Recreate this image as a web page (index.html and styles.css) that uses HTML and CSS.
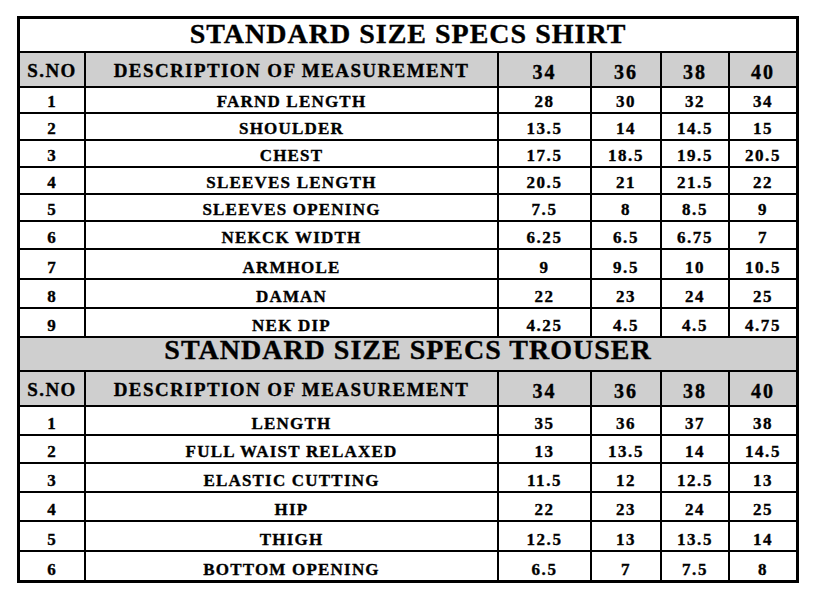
FILE: index.html
```html
<!DOCTYPE html>
<html lang="en">
<head>
<meta charset="utf-8">
<title>Standard Size Specs</title>
<link rel="stylesheet" href="styles.css">
</head>
<body>
<div class="sheet">
  <div class="title title-shirt">STANDARD SIZE SPECS SHIRT</div>
  <div class="hd">S.NO</div><div class="hd">DESCRIPTION OF MEASUREMENT</div><div class="hd num">34</div><div class="hd num">36</div><div class="hd num">38</div><div class="hd num">40</div>

  <div class="c">1</div><div class="c">FARND LENGTH</div><div class="c num">28</div><div class="c num">30</div><div class="c num">32</div><div class="c num">34</div>
  <div class="c">2</div><div class="c">SHOULDER</div><div class="c num">13.5</div><div class="c num">14</div><div class="c num">14.5</div><div class="c num">15</div>
  <div class="c">3</div><div class="c">CHEST</div><div class="c num">17.5</div><div class="c num">18.5</div><div class="c num">19.5</div><div class="c num">20.5</div>
  <div class="c">4</div><div class="c">SLEEVES LENGTH</div><div class="c num">20.5</div><div class="c num">21</div><div class="c num">21.5</div><div class="c num">22</div>
  <div class="c">5</div><div class="c">SLEEVES OPENING</div><div class="c num">7.5</div><div class="c num">8</div><div class="c num">8.5</div><div class="c num">9</div>
  <div class="c">6</div><div class="c">NEKCK WIDTH</div><div class="c num">6.25</div><div class="c num">6.5</div><div class="c num">6.75</div><div class="c num">7</div>
  <div class="c">7</div><div class="c">ARMHOLE</div><div class="c num">9</div><div class="c num">9.5</div><div class="c num">10</div><div class="c num">10.5</div>
  <div class="c">8</div><div class="c">DAMAN</div><div class="c num">22</div><div class="c num">23</div><div class="c num">24</div><div class="c num">25</div>
  <div class="c">9</div><div class="c">NEK DIP</div><div class="c num">4.25</div><div class="c num">4.5</div><div class="c num">4.5</div><div class="c num">4.75</div>

  <div class="title title-trouser">STANDARD SIZE SPECS TROUSER</div>
  <div class="hd">S.NO</div><div class="hd">DESCRIPTION OF MEASUREMENT</div><div class="hd num">34</div><div class="hd num">36</div><div class="hd num">38</div><div class="hd num">40</div>

  <div class="c">1</div><div class="c">LENGTH</div><div class="c num">35</div><div class="c num">36</div><div class="c num">37</div><div class="c num">38</div>
  <div class="c">2</div><div class="c">FULL WAIST RELAXED</div><div class="c num">13</div><div class="c num">13.5</div><div class="c num">14</div><div class="c num">14.5</div>
  <div class="c">3</div><div class="c">ELASTIC CUTTING</div><div class="c num">11.5</div><div class="c num">12</div><div class="c num">12.5</div><div class="c num">13</div>
  <div class="c">4</div><div class="c">HIP</div><div class="c num">22</div><div class="c num">23</div><div class="c num">24</div><div class="c num">25</div>
  <div class="c">5</div><div class="c">THIGH</div><div class="c num">12.5</div><div class="c num">13</div><div class="c num">13.5</div><div class="c num">14</div>
  <div class="c">6</div><div class="c">BOTTOM OPENING</div><div class="c num">6.5</div><div class="c num">7</div><div class="c num">7.5</div><div class="c num">8</div>
</div>
</body>
</html>
```
FILE: styles.css
```css
html, body {
  margin: 0;
  padding: 0;
  background: #ffffff;
}

body {
  font-family: "Liberation Serif", "Times New Roman", serif;
  font-weight: bold;
  color: #000000;
  -webkit-text-stroke: 0.35px #000000;
}

.sheet {
  display: grid;
  width: max-content;
  margin: 16px 0 0 17px;
  padding: 3px;
  gap: 2px;
  background: #000000;
  grid-template-columns: 64px 411px 91px 68px 66px 66px;
  grid-template-rows:
    32px 33px
    24px 25px 25px 25px 25px 26px 28px 27px 27px
    32px 33px
    27px 26px 27px 27px 28px 28px;
}

.title {
  grid-column: 1 / -1;
  display: flex;
  align-items: center;
  justify-content: center;
  font-size: 28px;
  letter-spacing: 1px;
  line-height: 1;
}

.title-shirt {
  background: #ffffff;
  padding-bottom: 3px;
}

.title-trouser {
  background: #cfcfcf;
  padding-bottom: 9px;
}

.hd {
  background: #cfcfcf;
  display: flex;
  align-items: center;
  justify-content: center;
  font-size: 19px;
  letter-spacing: 1.4px;
  line-height: 1;
  padding-top: 2px;
}

.hd.num {
  font-size: 20px;
  letter-spacing: 2px;
  padding-top: 4px;
}

.c {
  background: #ffffff;
  display: flex;
  align-items: flex-end;
  justify-content: center;
  font-size: 17px;
  letter-spacing: 1.2px;
  line-height: 1;
  padding-bottom: 2px;
}

.c.num {
  letter-spacing: 1.6px;
}
```
